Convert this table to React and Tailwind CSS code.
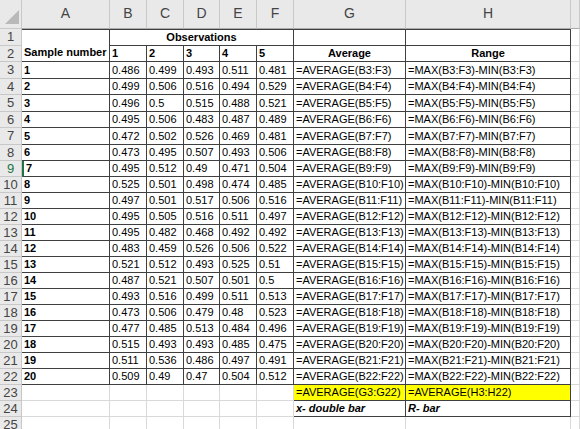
import React from "react";

const data = [
  ["0.486", "0.499", "0.493", "0.511", "0.481"],
  ["0.499", "0.506", "0.516", "0.494", "0.529"],
  ["0.496", "0.5", "0.515", "0.488", "0.521"],
  ["0.495", "0.506", "0.483", "0.487", "0.489"],
  ["0.472", "0.502", "0.526", "0.469", "0.481"],
  ["0.473", "0.495", "0.507", "0.493", "0.506"],
  ["0.495", "0.512", "0.49", "0.471", "0.504"],
  ["0.525", "0.501", "0.498", "0.474", "0.485"],
  ["0.497", "0.501", "0.517", "0.506", "0.516"],
  ["0.495", "0.505", "0.516", "0.511", "0.497"],
  ["0.495", "0.482", "0.468", "0.492", "0.492"],
  ["0.483", "0.459", "0.526", "0.506", "0.522"],
  ["0.521", "0.512", "0.493", "0.525", "0.51"],
  ["0.487", "0.521", "0.507", "0.501", "0.5"],
  ["0.493", "0.516", "0.499", "0.511", "0.513"],
  ["0.473", "0.506", "0.479", "0.48", "0.523"],
  ["0.477", "0.485", "0.513", "0.484", "0.496"],
  ["0.515", "0.493", "0.493", "0.485", "0.475"],
  ["0.511", "0.536", "0.486", "0.497", "0.491"],
  ["0.509", "0.49", "0.47", "0.504", "0.512"],
];

const letters = ["A", "B", "C", "D", "E", "F", "G", "H", ""];

// dark bordered cell inside the table
const dark = "border-r border-b border-[#3f3f3f] flex items-center px-[2px] text-[11px] text-black whitespace-nowrap overflow-hidden";
// plain gridline cell
const grid = "border-r border-b border-[#d9d9d9] flex items-center px-[2px] text-[11px] text-black whitespace-nowrap overflow-hidden";
const rowHead = "bg-[#e9e9e9] border-r border-b border-[#c8c8c8] flex items-center justify-center text-[13px] text-[#444]";

function RowHead({ n }) {
  const selected = n === 9;
  return (
    <div className={`${rowHead} ${selected ? "text-[#217346] bg-[#dcdcdc]" : ""}`}>{n}</div>
  );
}

export default function App() {
  return (
    <div
      className="w-[580px] h-[429px] overflow-hidden bg-white"
      style={{ fontFamily: '"Liberation Sans", Arial, sans-serif' }}
    >
      <div className="grid grid-cols-[22px_88px_37px_37px_36px_37px_37px_112px_165px_1fr] grid-rows-[29px_17px_16px_17px_16px_17px_16px_17px_16px_repeat(17,16px)]">
        {/* column headers */}
        <div className="bg-[#e9e9e9] border-r border-b border-[#c8c8c8] relative">
          <svg className="absolute right-[2px] bottom-[4px]" width="14" height="14" viewBox="0 0 14 14">
            <polygon points="14,0 14,14 0,14" fill="#b9b9b9" />
          </svg>
        </div>
        {letters.map((l, i) => (
          <div
            key={i}
            className="bg-[#e9e9e9] border-r border-b border-[#c8c8c8] border-b-[#ababab] flex items-end justify-center pb-[4px] text-[14px] text-[#444]"
          >
            {l}
          </div>
        ))}

        {/* row 1 + 2 */}
        <RowHead n={1} />
        <div className={`${dark} row-span-2 border-t font-bold items-end pb-[1px]`}>Sample number</div>
        <div className={`${dark} col-span-5 border-t font-bold justify-center`}>Observations</div>
        <div className={`${dark} border-t`}></div>
        <div className={`${dark} border-t`}></div>
        <div className={grid}></div>

        <RowHead n={2} />
        {["1", "2", "3", "4", "5"].map((h) => (
          <div key={h} className={`${dark} font-bold`}>{h}</div>
        ))}
        <div className={`${dark} font-bold justify-center`}>Average</div>
        <div className={`${dark} font-bold justify-center`}>Range</div>
        <div className={grid}></div>

        {/* data rows */}
        {data.map((vals, i) => {
          const r = i + 3;
          return (
            <React.Fragment key={r}>
              <RowHead n={r} />
              <div className={`${dark} font-bold ${r === 9 ? "border-l-2 border-l-[#217346]" : ""}`}>{i + 1}</div>
              {vals.map((v, j) => (
                <div key={j} className={dark}>{v}</div>
              ))}
              <div className={`${dark} text-[10.5px]`}>{`=AVERAGE(B${r}:F${r})`}</div>
              <div className={dark}>{`=MAX(B${r}:F${r})-MIN(B${r}:F${r})`}</div>
              <div className={grid}></div>
            </React.Fragment>
          );
        })}

        {/* row 23 */}
        <RowHead n={23} />
        {[0, 1, 2, 3, 4, 5].map((k) => (
          <div key={k} className={grid}></div>
        ))}
        <div className={`${dark} text-[10.5px] bg-[#ffff00]`}>=AVERAGE(G3:G22)</div>
        <div className={`${dark} bg-[#ffff00]`}>=AVERAGE(H3:H22)</div>
        <div className={grid}></div>

        {/* row 24 */}
        <RowHead n={24} />
        {[0, 1, 2, 3, 4, 5].map((k) => (
          <div key={k} className={grid}></div>
        ))}
        <div className={`${dark} font-bold italic`}>x- double bar</div>
        <div className={`${dark} font-bold italic`}>R- bar</div>
        <div className={grid}></div>

        {/* row 25 (partly visible) */}
        <RowHead n={25} />
        {[0, 1, 2, 3, 4, 5, 6, 7, 8].map((k) => (
          <div key={k} className={grid}></div>
        ))}
      </div>
    </div>
  );
}
